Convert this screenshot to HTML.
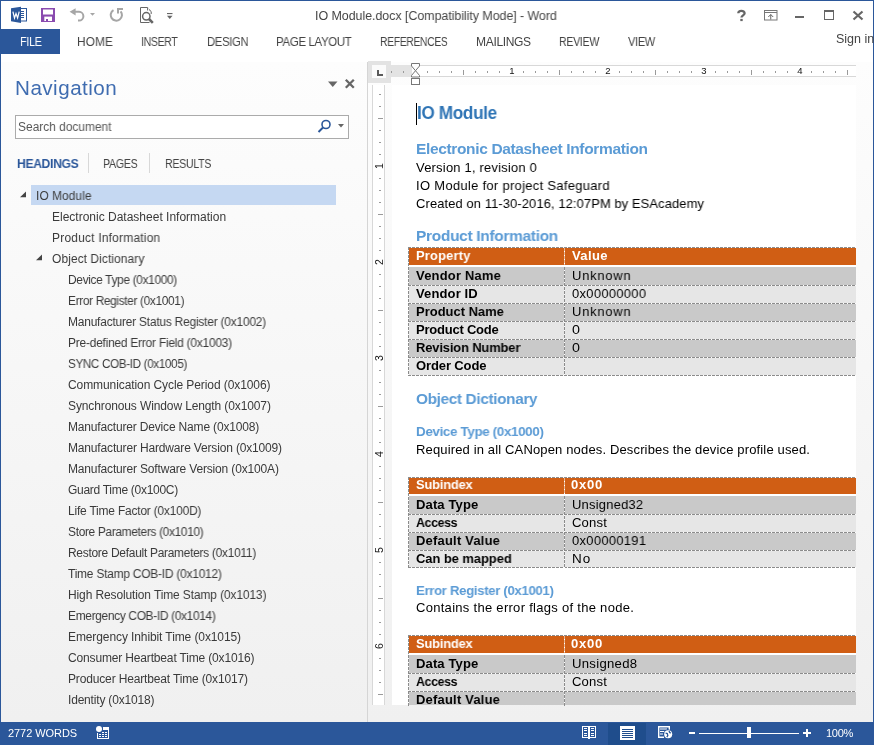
<!DOCTYPE html>
<html><head><meta charset="utf-8">
<style>
html,body{margin:0;padding:0;}
body{width:874px;height:745px;overflow:hidden;position:relative;background:#fff;font-family:"Liberation Sans",sans-serif;}
.a{position:absolute;}
.t{position:absolute;white-space:pre;line-height:1;font-family:"Liberation Sans",sans-serif;will-change:transform;}
.hk{position:absolute;width:1px;background:#9a9a9a;}
.vk{position:absolute;height:1px;background:#9a9a9a;}
.hn{position:absolute;font-size:9.5px;line-height:10px;color:#111;will-change:transform;margin-top:-1px;width:6px;text-align:center;font-family:"Liberation Sans",sans-serif;}
.vn{position:absolute;margin-left:0px;will-change:transform;font-size:10.5px;line-height:12px;height:12px;width:12px;text-align:center;color:#111;transform:rotate(-90deg);font-family:"Liberation Sans",sans-serif;}
.dh{position:absolute;height:1px;background:repeating-linear-gradient(90deg,#8c8c8c 0 3px,#ffffff 3px 4px);}
.dv{position:absolute;width:1px;background:repeating-linear-gradient(180deg,#8c8c8c 0 3px,#ffffff 3px 4px);}
</style></head><body>
<!-- window border -->
<div class="a" style="left:0;top:0;width:874px;height:1px;background:#2b579a"></div>
<div class="a" style="left:0;top:0;width:1px;height:745px;background:#2b579a"></div>
<div class="a" style="left:873px;top:0;width:1px;height:745px;background:#2b579a"></div>

<!-- QAT icons -->
<svg class="a" style="left:0;top:0" width="60" height="28" viewBox="0 0 60 28">
  <path d="M11 8.3 L21 6.8 L21 23 L11 21.3 Z" fill="#2b579a"/>
  <rect x="20.5" y="8.5" width="6" height="12.5" fill="#fff" stroke="#2b579a" stroke-width="1"/>
  <path d="M21 11.5h3M21 13.5h3M21 15.5h3M21 17.5h3" stroke="#2b579a" stroke-width="1"/>
  <path d="M12.9 11.7 L14.5 18 L16 13.5 L17.6 18 L19.2 11.7" fill="none" stroke="#fff" stroke-width="1.2"/>
  <rect x="41" y="8" width="14" height="14" fill="#8a4baf"/>
  <rect x="43" y="9.5" width="10" height="5" fill="#fff"/>
  <rect x="44.3" y="16.6" width="7.7" height="4.4" fill="#fff"/>
  <rect x="46" y="19" width="2" height="2" fill="#8a4baf"/>
</svg>
<svg class="a" style="left:69px;top:7px" width="28" height="15" viewBox="0 0 28 15">
  <path d="M0.6 4.8 L6.6 1.2 L6.6 8.6 Z" fill="#a6a6a6"/>
  <path d="M5 4.8 H10 A4.4 4.4 0 0 1 10 13.6 H9" fill="none" stroke="#a6a6a6" stroke-width="2"/>
  <path d="M21 6 L26 6 L23.5 8.7 Z" fill="#a6a6a6"/>
</svg>
<svg class="a" style="left:109px;top:7px" width="15" height="15" viewBox="0 0 15 15">
  <path d="M4.5 3.2 A5.6 5.6 0 1 0 11.6 4.4" fill="none" stroke="#a6a6a6" stroke-width="2"/>
  <path d="M9 6.5 V2 H14" fill="none" stroke="#a6a6a6" stroke-width="2" stroke-linejoin="miter"/>
</svg>
<svg class="a" style="left:139px;top:6px" width="17" height="18" viewBox="0 0 17 18">
  <path d="M8.6 1.5 H1.5 V16.5 H10.5" fill="none" stroke="#666" stroke-width="1"/>
  <path d="M8.6 1.5 V4.5 M10 3.5 L12.2 5.6 V8" fill="none" stroke="#666" stroke-width="1"/>
  <path d="M8.6 1.5 L12.2 5.2" fill="none" stroke="#888" stroke-width="0.8" stroke-dasharray="1 1"/>
  <circle cx="7.3" cy="10.3" r="3.7" fill="#fff" stroke="#666" stroke-width="1.5"/>
  <path d="M10 13 L13.8 16.8" stroke="#666" stroke-width="2.6"/>
</svg>
<svg class="a" style="left:166px;top:11px" width="8" height="9" viewBox="0 0 8 9">
  <rect x="1" y="2" width="5.5" height="1.1" fill="#666"/>
  <path d="M1 4.7 H6.5 L3.75 8 Z" fill="#666"/>
</svg>

<!-- window controls -->
<svg class="a" style="left:736px;top:9px" width="11" height="13" viewBox="0 0 11 13">
  <path d="M2.3 4.2 C2.3 1.2 8.6 1 8.6 4.2 C8.6 6.4 5.5 6.3 5.5 8.6" fill="none" stroke="#666" stroke-width="2.3"/>
  <rect x="4.3" y="9.9" width="2.4" height="2.2" fill="#666"/>
</svg>
<svg class="a" style="left:764px;top:10px" width="14" height="11" viewBox="0 0 14 11">
  <rect x="0.5" y="0.5" width="12.5" height="9.5" fill="none" stroke="#777" stroke-width="1"/>
  <path d="M0.5 2.5 H13" stroke="#777" stroke-width="1"/>
  <path d="M6.75 9.5 V4.5 M4.3 7 L6.75 4.5 L9.2 7" fill="none" stroke="#666" stroke-width="1"/>
</svg>
<div class="a" style="left:795px;top:16px;width:9px;height:2px;background:#666"></div>
<svg class="a" style="left:824px;top:10px" width="10" height="11" viewBox="0 0 10 11" shape-rendering="crispEdges">
  <rect x="0" y="0" width="10" height="10" fill="#666"/>
  <rect x="1" y="2" width="8" height="7" fill="#fff"/>
</svg>
<svg class="a" style="left:852px;top:10px" width="12" height="11" viewBox="0 0 12 11">
  <path d="M1.5 1.5 L10.5 9.5 M10.5 1.5 L1.5 9.5" stroke="#666" stroke-width="2.2"/>
</svg>

<!-- FILE tab -->
<div class="a" style="left:1px;top:29px;width:59px;height:25px;background:#2b579a"></div>

<!-- nav pane -->
<div class="a" style="left:1px;top:62px;width:366px;height:660px;background:linear-gradient(180deg,#fdfdfd 0%,#f0f0f0 100%)"></div>
<div class="a" style="left:367px;top:62px;width:1px;height:660px;background:#d5d5d5"></div>
<!-- doc backdrop -->
<div class="a" style="left:368px;top:62px;width:505px;height:660px;background:linear-gradient(180deg,#fdfdfd 0%,#f0f0f0 100%)"></div>

<!-- nav header icons -->
<svg class="a" style="left:328px;top:81px" width="10" height="7" viewBox="0 0 10 7">
  <path d="M0 0.5 H9.5 L4.75 6 Z" fill="#666"/>
</svg>
<svg class="a" style="left:344px;top:78px" width="12" height="12" viewBox="0 0 12 12">
  <path d="M1.8 1.8 L9.8 9.8 M9.8 1.8 L1.8 9.8" stroke="#666" stroke-width="2.3"/>
</svg>
<!-- search box -->
<div class="a" style="left:15px;top:115px;width:332px;height:22px;border:1px solid #ababab;background:#fff"></div>
<svg class="a" style="left:317px;top:119px" width="15" height="15" viewBox="0 0 15 15">
  <circle cx="9" cy="5.5" r="4" fill="none" stroke="#2b579a" stroke-width="1.6"/>
  <path d="M6 8.5 L1.5 13" stroke="#2b579a" stroke-width="2"/>
</svg>
<svg class="a" style="left:338px;top:124px" width="6" height="4" viewBox="0 0 6 4">
  <path d="M0 0 H6 L3 3.5 Z" fill="#666"/>
</svg>
<!-- nav tab separators -->
<div class="a" style="left:88px;top:153px;width:1px;height:20px;background:#d8d8d8"></div>
<div class="a" style="left:149px;top:153px;width:1px;height:20px;background:#d8d8d8"></div>
<!-- tree highlight -->
<div class="a" style="left:31px;top:185px;width:305px;height:20px;background:#c5d8f2"></div>
<svg class="a" style="left:19px;top:191px" width="8" height="8" viewBox="0 0 8 8"><path d="M7 0.6 V6.2 H1 Z" fill="#444"/></svg>
<svg class="a" style="left:35px;top:254px" width="8" height="8" viewBox="0 0 8 8"><path d="M7 0.6 V6.2 H1 Z" fill="#444"/></svg>

<!-- tab selector + rulers -->
<div class="a" style="left:368px;top:61px;width:23px;height:22px;background:#e3e3e3"></div>
<div class="a" style="left:372px;top:65px;width:14px;height:13px;background:#fbfbfb"></div>
<div class="a" style="left:377px;top:70px;width:2px;height:6px;background:#5a5a5a"></div>
<div class="a" style="left:377px;top:74px;width:6px;height:2px;background:#5a5a5a"></div>
<!-- horizontal ruler -->
<div class="a" style="left:391px;top:65px;width:465px;height:12px;background:#fff;border-top:1px solid #d8d8d8;border-bottom:1px solid #d8d8d8;box-sizing:border-box"></div>
<div class="a" style="left:391px;top:65px;width:21px;height:12px;background:#e3e3e3"></div>
<!-- vertical ruler -->
<div class="a" style="left:372px;top:85px;width:13px;height:620px;background:#fff;border-left:1px solid #d8d8d8;border-right:1px solid #d8d8d8;box-sizing:border-box"></div>
<div class="hk" style="left:391px;top:71px;height:2px"></div>
<div class="hk" style="left:403px;top:71px;height:2px"></div>
<div class="hk" style="left:427px;top:71px;height:2px"></div>
<div class="hk" style="left:439px;top:71px;height:2px"></div>
<div class="hk" style="left:451px;top:71px;height:2px"></div>
<div class="hk" style="left:463px;top:70px;height:5px"></div>
<div class="hk" style="left:475px;top:71px;height:2px"></div>
<div class="hk" style="left:487px;top:71px;height:2px"></div>
<div class="hk" style="left:499px;top:71px;height:2px"></div>
<div class="hk" style="left:523px;top:71px;height:2px"></div>
<div class="hk" style="left:535px;top:71px;height:2px"></div>
<div class="hk" style="left:547px;top:71px;height:2px"></div>
<div class="hk" style="left:559px;top:70px;height:5px"></div>
<div class="hk" style="left:571px;top:71px;height:2px"></div>
<div class="hk" style="left:583px;top:71px;height:2px"></div>
<div class="hk" style="left:595px;top:71px;height:2px"></div>
<div class="hk" style="left:619px;top:71px;height:2px"></div>
<div class="hk" style="left:631px;top:71px;height:2px"></div>
<div class="hk" style="left:643px;top:71px;height:2px"></div>
<div class="hk" style="left:655px;top:70px;height:5px"></div>
<div class="hk" style="left:667px;top:71px;height:2px"></div>
<div class="hk" style="left:679px;top:71px;height:2px"></div>
<div class="hk" style="left:691px;top:71px;height:2px"></div>
<div class="hk" style="left:715px;top:71px;height:2px"></div>
<div class="hk" style="left:727px;top:71px;height:2px"></div>
<div class="hk" style="left:739px;top:71px;height:2px"></div>
<div class="hk" style="left:751px;top:70px;height:5px"></div>
<div class="hk" style="left:763px;top:71px;height:2px"></div>
<div class="hk" style="left:775px;top:71px;height:2px"></div>
<div class="hk" style="left:787px;top:71px;height:2px"></div>
<div class="hk" style="left:811px;top:71px;height:2px"></div>
<div class="hk" style="left:823px;top:71px;height:2px"></div>
<div class="hk" style="left:835px;top:71px;height:2px"></div>
<div class="hk" style="left:847px;top:70px;height:5px"></div>
<div class="hn" style="left:508.5px;top:67px">1</div>
<div class="hn" style="left:604.5px;top:67px">2</div>
<div class="hn" style="left:700.5px;top:67px">3</div>
<div class="hn" style="left:796.5px;top:67px">4</div>
<div class="vk" style="left:379px;top:94px;width:2px"></div>
<div class="vk" style="left:379px;top:106px;width:2px"></div>
<div class="vk" style="left:378px;top:118px;width:5px"></div>
<div class="vk" style="left:379px;top:130px;width:2px"></div>
<div class="vk" style="left:379px;top:142px;width:2px"></div>
<div class="vk" style="left:379px;top:154px;width:2px"></div>
<div class="vn" style="left:373px;top:160px">1</div>
<div class="vk" style="left:379px;top:178px;width:2px"></div>
<div class="vk" style="left:379px;top:190px;width:2px"></div>
<div class="vk" style="left:379px;top:202px;width:2px"></div>
<div class="vk" style="left:378px;top:214px;width:5px"></div>
<div class="vk" style="left:379px;top:226px;width:2px"></div>
<div class="vk" style="left:379px;top:238px;width:2px"></div>
<div class="vk" style="left:379px;top:250px;width:2px"></div>
<div class="vn" style="left:373px;top:256px">2</div>
<div class="vk" style="left:379px;top:274px;width:2px"></div>
<div class="vk" style="left:379px;top:286px;width:2px"></div>
<div class="vk" style="left:379px;top:298px;width:2px"></div>
<div class="vk" style="left:378px;top:310px;width:5px"></div>
<div class="vk" style="left:379px;top:322px;width:2px"></div>
<div class="vk" style="left:379px;top:334px;width:2px"></div>
<div class="vk" style="left:379px;top:346px;width:2px"></div>
<div class="vn" style="left:373px;top:352px">3</div>
<div class="vk" style="left:379px;top:370px;width:2px"></div>
<div class="vk" style="left:379px;top:382px;width:2px"></div>
<div class="vk" style="left:379px;top:394px;width:2px"></div>
<div class="vk" style="left:378px;top:406px;width:5px"></div>
<div class="vk" style="left:379px;top:418px;width:2px"></div>
<div class="vk" style="left:379px;top:430px;width:2px"></div>
<div class="vk" style="left:379px;top:442px;width:2px"></div>
<div class="vn" style="left:373px;top:448px">4</div>
<div class="vk" style="left:379px;top:466px;width:2px"></div>
<div class="vk" style="left:379px;top:478px;width:2px"></div>
<div class="vk" style="left:379px;top:490px;width:2px"></div>
<div class="vk" style="left:378px;top:502px;width:5px"></div>
<div class="vk" style="left:379px;top:514px;width:2px"></div>
<div class="vk" style="left:379px;top:526px;width:2px"></div>
<div class="vk" style="left:379px;top:538px;width:2px"></div>
<div class="vn" style="left:373px;top:544px">5</div>
<div class="vk" style="left:379px;top:562px;width:2px"></div>
<div class="vk" style="left:379px;top:574px;width:2px"></div>
<div class="vk" style="left:379px;top:586px;width:2px"></div>
<div class="vk" style="left:378px;top:598px;width:5px"></div>
<div class="vk" style="left:379px;top:610px;width:2px"></div>
<div class="vk" style="left:379px;top:622px;width:2px"></div>
<div class="vk" style="left:379px;top:634px;width:2px"></div>
<div class="vn" style="left:373px;top:640px">6</div>
<div class="vk" style="left:379px;top:658px;width:2px"></div>
<div class="vk" style="left:379px;top:670px;width:2px"></div>
<div class="vk" style="left:379px;top:682px;width:2px"></div>
<div class="vk" style="left:378px;top:694px;width:5px"></div>
<!-- indent marker -->
<svg class="a" style="left:411px;top:63px" width="10" height="23" viewBox="0 0 10 23">
  <path d="M0.5 0.5 H8.5 V3 L4.5 7.7 L8.5 12.5 V14 H0.5 V12.5 L4.5 7.7 L0.5 3 Z" fill="#fff" stroke="#777" stroke-width="1"/>
  <rect x="0.5" y="15.5" width="8" height="6" fill="#fff" stroke="#777" stroke-width="1"/>
</svg>
<!-- page -->
<div class="a" style="left:392px;top:85px;width:464px;height:620px;background:#fff"></div>
<!-- cursor -->
<div class="a" style="left:416px;top:103px;width:1px;height:22px;background:#000"></div>

<div class="dh" style="left:408px;top:247px;width:448px"></div>
<div class="a" style="left:409px;top:248px;width:447px;height:17px;background:#d05e14"></div>
<div class="a" style="left:564px;top:248px;width:1px;height:17px;background:repeating-linear-gradient(180deg,#e9b48f 0 3px,#ffffff 3px 4px)"></div>
<div class="a" style="left:409px;top:267px;width:447px;height:18px;background:#c9c9c9"></div>
<div class="dh" style="left:408px;top:285px;width:448px"></div>
<div class="a" style="left:409px;top:286px;width:447px;height:17px;background:#e6e6e6"></div>
<div class="dh" style="left:408px;top:303px;width:448px"></div>
<div class="a" style="left:409px;top:304px;width:447px;height:17px;background:#c9c9c9"></div>
<div class="dh" style="left:408px;top:321px;width:448px"></div>
<div class="a" style="left:409px;top:322px;width:447px;height:17px;background:#e6e6e6"></div>
<div class="dh" style="left:408px;top:339px;width:448px"></div>
<div class="a" style="left:409px;top:340px;width:447px;height:17px;background:#c9c9c9"></div>
<div class="dh" style="left:408px;top:357px;width:448px"></div>
<div class="a" style="left:409px;top:358px;width:447px;height:17px;background:#e6e6e6"></div>
<div class="dh" style="left:408px;top:375px;width:448px"></div>
<div class="dv" style="left:408px;top:247px;height:129px"></div>
<div class="dv" style="left:564px;top:267px;height:109px"></div>
<div class="dh" style="left:408px;top:477px;width:448px"></div>
<div class="a" style="left:409px;top:478px;width:447px;height:16px;background:#d05e14"></div>
<div class="a" style="left:564px;top:478px;width:1px;height:16px;background:repeating-linear-gradient(180deg,#e9b48f 0 3px,#ffffff 3px 4px)"></div>
<div class="a" style="left:409px;top:496px;width:447px;height:18px;background:#c9c9c9"></div>
<div class="dh" style="left:408px;top:514px;width:448px"></div>
<div class="a" style="left:409px;top:515px;width:447px;height:17px;background:#e6e6e6"></div>
<div class="dh" style="left:408px;top:532px;width:448px"></div>
<div class="a" style="left:409px;top:533px;width:447px;height:17px;background:#c9c9c9"></div>
<div class="dh" style="left:408px;top:550px;width:448px"></div>
<div class="a" style="left:409px;top:551px;width:447px;height:16px;background:#e6e6e6"></div>
<div class="dh" style="left:408px;top:567px;width:448px"></div>
<div class="dv" style="left:408px;top:477px;height:91px"></div>
<div class="dv" style="left:564px;top:496px;height:72px"></div>
<div class="dh" style="left:408px;top:635px;width:448px"></div>
<div class="a" style="left:409px;top:636px;width:447px;height:17px;background:#d05e14"></div>
<div class="a" style="left:564px;top:636px;width:1px;height:17px;background:repeating-linear-gradient(180deg,#e9b48f 0 3px,#ffffff 3px 4px)"></div>
<div class="a" style="left:409px;top:655px;width:447px;height:18px;background:#c9c9c9"></div>
<div class="dh" style="left:408px;top:673px;width:448px"></div>
<div class="a" style="left:409px;top:674px;width:447px;height:17px;background:#e6e6e6"></div>
<div class="dh" style="left:408px;top:691px;width:448px"></div>
<div class="a" style="left:409px;top:692px;width:447px;height:13px;background:#c9c9c9"></div>
<div class="dv" style="left:408px;top:635px;height:71px"></div>
<div class="dv" style="left:564px;top:655px;height:51px"></div>

<!-- status bar -->
<div class="a" style="left:0;top:722px;width:874px;height:23px;background:#2b579a"></div>
<svg class="a" style="left:96px;top:725px" width="15" height="15" viewBox="0 0 15 15" shape-rendering="crispEdges">
  <circle cx="3" cy="4" r="3" fill="#fff" shape-rendering="auto"/>
  <rect x="1" y="8" width="1" height="6" fill="#fff"/>
  <rect x="1" y="13" width="12" height="1" fill="#fff"/>
  <rect x="12" y="2" width="1" height="12" fill="#fff"/>
  <rect x="7" y="2" width="6" height="3" fill="#fff"/>
  <rect x="6" y="7" width="2" height="1" fill="#fff"/><rect x="9" y="7" width="2" height="1" fill="#fff"/>
  <rect x="3" y="9" width="2" height="1" fill="#fff"/><rect x="6" y="9" width="2" height="1" fill="#fff"/><rect x="9" y="9" width="2" height="1" fill="#fff"/>
  <rect x="3" y="11" width="2" height="1" fill="#fff"/><rect x="6" y="11" width="2" height="1" fill="#fff"/><rect x="9" y="11" width="2" height="1" fill="#fff"/>
</svg>
<!-- read mode -->
<svg class="a" style="left:581px;top:725px" width="16" height="15" viewBox="0 0 16 15" shape-rendering="crispEdges">
  <rect x="1" y="1" width="14" height="1" fill="#fff"/>
  <rect x="1" y="12" width="14" height="1" fill="#fff"/>
  <rect x="1" y="1" width="1" height="12" fill="#fff"/>
  <rect x="14" y="1" width="1" height="12" fill="#fff"/>
  <rect x="7" y="1" width="2" height="13" fill="#fff"/>
  <rect x="3" y="3" width="3" height="1" fill="#fff"/><rect x="10" y="3" width="3" height="1" fill="#fff"/>
  <rect x="3" y="5" width="3" height="1" fill="#fff"/><rect x="10" y="5" width="3" height="1" fill="#fff"/>
  <rect x="3" y="8" width="3" height="1" fill="#fff"/><rect x="10" y="8" width="3" height="1" fill="#fff"/>
  <rect x="3" y="10" width="3" height="1" fill="#fff"/><rect x="10" y="10" width="3" height="1" fill="#fff"/>
</svg>
<div class="a" style="left:608px;top:723px;width:38px;height:22px;background:#1f4d8c"></div>
<svg class="a" style="left:619px;top:725px" width="16" height="15" viewBox="0 0 16 15" shape-rendering="crispEdges">
  <rect x="1" y="1" width="15" height="14" fill="#fff"/>
  <rect x="3" y="3" width="11" height="10" fill="#1f4d8c"/>
  <rect x="3" y="3" width="11" height="1" fill="#fff"/>
  <rect x="3" y="5" width="11" height="1" fill="#fff"/>
  <rect x="3" y="7" width="11" height="1" fill="#fff"/>
  <rect x="3" y="9" width="11" height="1" fill="#fff"/>
  <rect x="3" y="11" width="11" height="1" fill="#fff"/>
</svg>
<svg class="a" style="left:657px;top:725px" width="16" height="15" viewBox="0 0 16 15">
  <path d="M7 12.3 H1.7 V1.7 H12.3 V5" fill="none" stroke="#fff" stroke-width="1.4"/>
  <rect x="3" y="3.5" width="7" height="1" fill="#fff"/>
  <rect x="3" y="6" width="5" height="1" fill="#fff"/>
  <rect x="3" y="8.5" width="3" height="1" fill="#fff"/>
  <circle cx="11.2" cy="9.2" r="4.8" fill="#2b579a"/>
  <circle cx="11.2" cy="9.2" r="4" fill="#fff"/>
  <path d="M8.6 8.2 L10.3 8.6 L10.8 10.6 L9.8 12 M12 6 L12.8 7.6 L14 8" stroke="#2b579a" stroke-width="1.3" fill="none"/>
</svg>
<div class="a" style="left:689px;top:732px;width:6px;height:2px;background:#fff"></div>
<div class="a" style="left:699px;top:733px;width:100px;height:1px;background:#fff"></div>
<div class="a" style="left:747px;top:727px;width:4px;height:11px;background:#fff"></div>
<div class="a" style="left:803px;top:732px;width:8px;height:2px;background:#fff"></div>
<div class="a" style="left:806px;top:729px;width:2px;height:8px;background:#fff"></div>

<div class="t" id="t0" style="left:315.00px;top:9.94px;font-size:12.5px;color:#444444;letter-spacing:-0.066px;transform:scaleX(0.9983);transform-origin:0 0;">IO Module.docx [Compatibility Mode] - Word</div>
<div class="t" id="t1" style="left:20.00px;top:36.02px;font-size:12px;color:#ffffff;letter-spacing:-0.350px;transform:scaleX(0.9047);transform-origin:0 0;">FILE</div>
<div class="t" id="t2" style="left:77.00px;top:36.02px;font-size:12px;color:#444444;letter-spacing:0.100px;transform:scaleX(0.9886);transform-origin:0 0;">HOME</div>
<div class="t" id="t3" style="left:141.00px;top:36.02px;font-size:12px;color:#444444;letter-spacing:-0.350px;transform:scaleX(0.8732);transform-origin:0 0;">INSERT</div>
<div class="t" id="t4" style="left:207.00px;top:36.02px;font-size:12px;color:#444444;letter-spacing:-0.350px;transform:scaleX(0.9429);transform-origin:0 0;">DESIGN</div>
<div class="t" id="t5" style="left:276.00px;top:36.02px;font-size:12px;color:#444444;letter-spacing:-0.350px;transform:scaleX(0.9539);transform-origin:0 0;">PAGE LAYOUT</div>
<div class="t" id="t6" style="left:380.00px;top:36.02px;font-size:12px;color:#444444;letter-spacing:-0.350px;transform:scaleX(0.8598);transform-origin:0 0;">REFERENCES</div>
<div class="t" id="t7" style="left:476.00px;top:36.02px;font-size:12px;color:#444444;letter-spacing:-0.343px;transform:scaleX(1.0038);transform-origin:0 0;">MAILINGS</div>
<div class="t" id="t8" style="left:559.00px;top:36.02px;font-size:12px;color:#444444;letter-spacing:-0.350px;transform:scaleX(0.8865);transform-origin:0 0;">REVIEW</div>
<div class="t" id="t9" style="left:628.00px;top:36.02px;font-size:12px;color:#444444;letter-spacing:-0.350px;transform:scaleX(0.9173);transform-origin:0 0;">VIEW</div>
<div class="t" id="t10" style="left:836.00px;top:32.94px;font-size:12.5px;color:#444444;">Sign in</div>
<div class="t" id="t11" style="left:15.00px;top:78.02px;font-size:20.5px;color:#3f6cb0;letter-spacing:0.478px;transform:scaleX(1.0061);transform-origin:0 0;">Navigation</div>
<div class="t" id="t12" style="left:18.00px;top:121.02px;font-size:12px;color:#585858;letter-spacing:-0.014px;transform:scaleX(0.9957);transform-origin:0 0;">Search document</div>
<div class="t" id="t13" style="left:17.00px;top:157.94px;font-size:12.5px;color:#2b579a;font-weight:bold;letter-spacing:-0.350px;transform:scaleX(0.9710);transform-origin:0 0;">HEADINGS</div>
<div class="t" id="t14" style="left:103.00px;top:157.94px;font-size:12.5px;color:#444444;letter-spacing:-0.350px;transform:scaleX(0.8514);transform-origin:0 0;">PAGES</div>
<div class="t" id="t15" style="left:165.00px;top:157.94px;font-size:12.5px;color:#444444;letter-spacing:-0.350px;transform:scaleX(0.8491);transform-origin:0 0;">RESULTS</div>
<div class="t" id="t16" style="left:36.00px;top:190.02px;font-size:12px;color:#3a3a3a;letter-spacing:0.088px;transform:scaleX(0.9891);transform-origin:0 0;">IO Module</div>
<div class="t" id="t17" style="left:52.00px;top:211.02px;font-size:12px;color:#3a3a3a;">Electronic Datasheet Information</div>
<div class="t" id="t18" style="left:52.00px;top:232.02px;font-size:12px;color:#3a3a3a;letter-spacing:0.211px;transform:scaleX(0.9963);transform-origin:0 0;">Product Information</div>
<div class="t" id="t19" style="left:52.00px;top:253.02px;font-size:12px;color:#3a3a3a;letter-spacing:0.081px;transform:scaleX(0.9957);transform-origin:0 0;">Object Dictionary</div>
<div class="t" id="t20" style="left:68.00px;top:274.02px;font-size:12px;color:#3a3a3a;letter-spacing:-0.350px;transform:scaleX(0.9945);transform-origin:0 0;">Device Type (0x1000)</div>
<div class="t" id="t21" style="left:68.00px;top:295.02px;font-size:12px;color:#3a3a3a;letter-spacing:-0.350px;transform:scaleX(0.9897);transform-origin:0 0;">Error Register (0x1001)</div>
<div class="t" id="t22" style="left:68.00px;top:316.02px;font-size:12px;color:#3a3a3a;letter-spacing:-0.228px;transform:scaleX(0.9980);transform-origin:0 0;">Manufacturer Status Register (0x1002)</div>
<div class="t" id="t23" style="left:68.00px;top:337.02px;font-size:12px;color:#3a3a3a;letter-spacing:-0.235px;transform:scaleX(0.9963);transform-origin:0 0;">Pre-defined Error Field (0x1003)</div>
<div class="t" id="t24" style="left:68.00px;top:358.02px;font-size:12px;color:#3a3a3a;letter-spacing:-0.350px;transform:scaleX(0.9719);transform-origin:0 0;">SYNC COB-ID (0x1005)</div>
<div class="t" id="t25" style="left:68.00px;top:379.02px;font-size:12px;color:#3a3a3a;letter-spacing:-0.085px;">Communication Cycle Period (0x1006)</div>
<div class="t" id="t26" style="left:68.00px;top:400.02px;font-size:12px;color:#3a3a3a;letter-spacing:-0.118px;">Synchronous Window Length (0x1007)</div>
<div class="t" id="t27" style="left:68.00px;top:421.02px;font-size:12px;color:#3a3a3a;letter-spacing:-0.172px;">Manufacturer Device Name (0x1008)</div>
<div class="t" id="t28" style="left:68.00px;top:442.02px;font-size:12px;color:#3a3a3a;letter-spacing:-0.162px;">Manufacturer Hardware Version (0x1009)</div>
<div class="t" id="t29" style="left:68.00px;top:463.02px;font-size:12px;color:#3a3a3a;letter-spacing:-0.159px;">Manufacturer Software Version (0x100A)</div>
<div class="t" id="t30" style="left:68.00px;top:484.02px;font-size:12px;color:#3a3a3a;letter-spacing:-0.300px;transform:scaleX(1.0019);transform-origin:0 0;">Guard Time (0x100C)</div>
<div class="t" id="t31" style="left:68.00px;top:505.02px;font-size:12px;color:#3a3a3a;letter-spacing:-0.213px;transform:scaleX(0.9985);transform-origin:0 0;">Life Time Factor (0x100D)</div>
<div class="t" id="t32" style="left:68.00px;top:526.02px;font-size:12px;color:#3a3a3a;letter-spacing:-0.350px;transform:scaleX(0.9955);transform-origin:0 0;">Store Parameters (0x1010)</div>
<div class="t" id="t33" style="left:68.00px;top:547.02px;font-size:12px;color:#3a3a3a;letter-spacing:-0.297px;transform:scaleX(0.9989);transform-origin:0 0;">Restore Default Parameters (0x1011)</div>
<div class="t" id="t34" style="left:68.00px;top:568.02px;font-size:12px;color:#3a3a3a;letter-spacing:-0.232px;transform:scaleX(0.9961);transform-origin:0 0;">Time Stamp COB-ID (0x1012)</div>
<div class="t" id="t35" style="left:68.00px;top:589.02px;font-size:12px;color:#3a3a3a;letter-spacing:-0.121px;transform:scaleX(0.9990);transform-origin:0 0;">High Resolution Time Stamp (0x1013)</div>
<div class="t" id="t36" style="left:68.00px;top:610.02px;font-size:12px;color:#3a3a3a;letter-spacing:-0.346px;transform:scaleX(0.9959);transform-origin:0 0;">Emergency COB-ID (0x1014)</div>
<div class="t" id="t37" style="left:68.00px;top:631.02px;font-size:12px;color:#3a3a3a;letter-spacing:-0.100px;">Emergency Inhibit Time (0x1015)</div>
<div class="t" id="t38" style="left:68.00px;top:652.02px;font-size:12px;color:#3a3a3a;letter-spacing:-0.171px;transform:scaleX(1.0022);transform-origin:0 0;">Consumer Heartbeat Time (0x1016)</div>
<div class="t" id="t39" style="left:68.00px;top:673.02px;font-size:12px;color:#3a3a3a;letter-spacing:-0.158px;transform:scaleX(1.0011);transform-origin:0 0;">Producer Heartbeat Time (0x1017)</div>
<div class="t" id="t40" style="left:68.00px;top:694.02px;font-size:12px;color:#3a3a3a;letter-spacing:-0.187px;">Identity (0x1018)</div>
<div class="t" id="t41" style="left:8.00px;top:728.01px;font-size:11px;color:#ffffff;letter-spacing:-0.056px;">2772 WORDS</div>
<div class="t" id="t42" style="left:826.00px;top:728.01px;font-size:11px;color:#ffffff;letter-spacing:-0.300px;transform:scaleX(1.0077);transform-origin:0 0;">100%</div>
<div class="t" id="t43" style="left:417.00px;top:104.84px;font-size:17.5px;color:#2e74b5;font-weight:bold;letter-spacing:-0.350px;transform:scaleX(0.9800);transform-origin:0 0;">IO Module</div>
<div class="t" id="t44" style="left:416.00px;top:141.00px;font-size:15.5px;color:#5b9bd5;font-weight:bold;letter-spacing:-0.350px;">Electronic Datasheet Information</div>
<div class="t" id="t45" style="left:416.00px;top:161.02px;font-size:13px;color:#000;letter-spacing:0.195px;transform:scaleX(0.9983);transform-origin:0 0;">Version 1, revision 0</div>
<div class="t" id="t46" style="left:416.00px;top:179.02px;font-size:13px;color:#000;letter-spacing:0.307px;transform:scaleX(0.9969);transform-origin:0 0;">IO Module for project Safeguard</div>
<div class="t" id="t47" style="left:416.00px;top:197.02px;font-size:13px;color:#000;letter-spacing:0.086px;transform:scaleX(0.9972);transform-origin:0 0;">Created on 11-30-2016, 12:07PM by ESAcademy</div>
<div class="t" id="t48" style="left:416.00px;top:228.00px;font-size:15.5px;color:#5b9bd5;font-weight:bold;letter-spacing:-0.294px;transform:scaleX(0.9957);transform-origin:0 0;">Product Information</div>
<div class="t" id="t49" style="left:416.00px;top:391.00px;font-size:15.5px;color:#5b9bd5;font-weight:bold;letter-spacing:-0.350px;transform:scaleX(0.9901);transform-origin:0 0;">Object Dictionary</div>
<div class="t" id="t50" style="left:416.00px;top:425.00px;font-size:13.5px;color:#5b9bd5;font-weight:bold;letter-spacing:-0.350px;transform:scaleX(0.9921);transform-origin:0 0;">Device Type (0x1000)</div>
<div class="t" id="t51" style="left:416.00px;top:443.02px;font-size:13px;color:#000;letter-spacing:0.148px;">Required in all CANopen nodes. Describes the device profile used.</div>
<div class="t" id="t52" style="left:416.00px;top:584.00px;font-size:13.5px;color:#5b9bd5;font-weight:bold;letter-spacing:-0.350px;transform:scaleX(0.9784);transform-origin:0 0;">Error Register (0x1001)</div>
<div class="t" id="t53" style="left:416.00px;top:601.02px;font-size:13px;color:#000;letter-spacing:0.289px;">Contains the error flags of the node.</div>
<div class="t" id="t54" style="left:416.00px;top:249.02px;font-size:13px;color:#fff;font-weight:bold;letter-spacing:0.186px;transform:scaleX(0.9926);transform-origin:0 0;">Property</div>
<div class="t" id="t55" style="left:572.00px;top:249.02px;font-size:13px;color:#fff;font-weight:bold;letter-spacing:0.375px;">Value</div>
<div class="t" id="t56" style="left:416.00px;top:269.02px;font-size:13px;color:#000;font-weight:bold;letter-spacing:0.190px;transform:scaleX(0.9976);transform-origin:0 0;">Vendor Name</div>
<div class="t" id="t57" style="left:572.00px;top:269.02px;font-size:13px;color:#000;letter-spacing:0.800px;transform:scaleX(0.9930);transform-origin:0 0;">Unknown</div>
<div class="t" id="t58" style="left:416.00px;top:287.02px;font-size:13px;color:#000;font-weight:bold;letter-spacing:0.125px;">Vendor ID</div>
<div class="t" id="t59" style="left:572.00px;top:287.02px;font-size:13px;color:#000;letter-spacing:0.311px;transform:scaleX(0.9945);transform-origin:0 0;">0x00000000</div>
<div class="t" id="t60" style="left:416.00px;top:305.02px;font-size:13px;color:#000;font-weight:bold;letter-spacing:-0.009px;transform:scaleX(0.9978);transform-origin:0 0;">Product Name</div>
<div class="t" id="t61" style="left:572.00px;top:305.02px;font-size:13px;color:#000;letter-spacing:0.800px;transform:scaleX(0.9930);transform-origin:0 0;">Unknown</div>
<div class="t" id="t62" style="left:416.00px;top:323.02px;font-size:13px;color:#000;font-weight:bold;letter-spacing:-0.227px;">Product Code</div>
<div class="t" id="t63" style="left:572.00px;top:323.02px;font-size:13px;color:#000;transform:scaleX(1.1010);transform-origin:0 0;">0</div>
<div class="t" id="t64" style="left:416.00px;top:341.02px;font-size:13px;color:#000;font-weight:bold;letter-spacing:-0.157px;transform:scaleX(0.9962);transform-origin:0 0;">Revision Number</div>
<div class="t" id="t65" style="left:572.00px;top:341.02px;font-size:13px;color:#000;transform:scaleX(1.1010);transform-origin:0 0;">0</div>
<div class="t" id="t66" style="left:416.00px;top:359.02px;font-size:13px;color:#000;font-weight:bold;letter-spacing:-0.111px;">Order Code</div>
<div class="t" id="t67" style="left:416.00px;top:478.02px;font-size:13px;color:#fff;font-weight:bold;letter-spacing:-0.186px;transform:scaleX(0.9893);transform-origin:0 0;">Subindex</div>
<div class="t" id="t68" style="left:571.00px;top:478.02px;font-size:13px;color:#fff;font-weight:bold;letter-spacing:0.700px;transform:scaleX(1.0069);transform-origin:0 0;">0x00</div>
<div class="t" id="t69" style="left:416.00px;top:498.02px;font-size:13px;color:#000;font-weight:bold;letter-spacing:0.088px;transform:scaleX(1.0067);transform-origin:0 0;">Data Type</div>
<div class="t" id="t70" style="left:572.00px;top:498.02px;font-size:13px;color:#000;letter-spacing:0.211px;transform:scaleX(0.9971);transform-origin:0 0;">Unsigned32</div>
<div class="t" id="t71" style="left:416.00px;top:516.02px;font-size:13px;color:#000;font-weight:bold;letter-spacing:-0.350px;transform:scaleX(0.9476);transform-origin:0 0;">Access</div>
<div class="t" id="t72" style="left:572.00px;top:516.02px;font-size:13px;color:#000;letter-spacing:0.150px;transform:scaleX(1.0062);transform-origin:0 0;">Const</div>
<div class="t" id="t73" style="left:416.00px;top:534.02px;font-size:13px;color:#000;font-weight:bold;letter-spacing:0.200px;transform:scaleX(0.9976);transform-origin:0 0;">Default Value</div>
<div class="t" id="t74" style="left:572.00px;top:534.02px;font-size:13px;color:#000;letter-spacing:0.311px;transform:scaleX(0.9945);transform-origin:0 0;">0x00000191</div>
<div class="t" id="t75" style="left:416.00px;top:552.02px;font-size:13px;color:#000;font-weight:bold;letter-spacing:-0.058px;transform:scaleX(0.9958);transform-origin:0 0;">Can be mapped</div>
<div class="t" id="t76" style="left:572.00px;top:552.02px;font-size:13px;color:#000;letter-spacing:1.000px;transform:scaleX(1.0379);transform-origin:0 0;">No</div>
<div class="t" id="t77" style="left:416.00px;top:637.02px;font-size:13px;color:#fff;font-weight:bold;letter-spacing:-0.186px;transform:scaleX(0.9893);transform-origin:0 0;">Subindex</div>
<div class="t" id="t78" style="left:571.00px;top:637.02px;font-size:13px;color:#fff;font-weight:bold;letter-spacing:0.700px;transform:scaleX(1.0069);transform-origin:0 0;">0x00</div>
<div class="t" id="t79" style="left:416.00px;top:657.02px;font-size:13px;color:#000;font-weight:bold;letter-spacing:0.088px;transform:scaleX(1.0067);transform-origin:0 0;">Data Type</div>
<div class="t" id="t80" style="left:572.00px;top:657.02px;font-size:13px;color:#000;letter-spacing:0.287px;transform:scaleX(1.0095);transform-origin:0 0;">Unsigned8</div>
<div class="t" id="t81" style="left:416.00px;top:675.02px;font-size:13px;color:#000;font-weight:bold;letter-spacing:-0.350px;transform:scaleX(0.9476);transform-origin:0 0;">Access</div>
<div class="t" id="t82" style="left:572.00px;top:675.02px;font-size:13px;color:#000;letter-spacing:0.150px;transform:scaleX(1.0062);transform-origin:0 0;">Const</div>
<div class="t" id="t83" style="left:416.00px;top:693.02px;font-size:13px;color:#000;font-weight:bold;letter-spacing:0.200px;transform:scaleX(0.9976);transform-origin:0 0;">Default Value</div>
</body></html>
